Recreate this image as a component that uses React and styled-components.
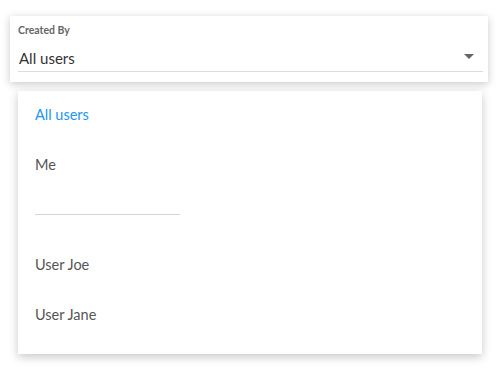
import React from "react";
import styled, { createGlobalStyle } from "styled-components";

const Global = createGlobalStyle`
  body {
    margin: 0;
    background: #fff;
    font-family: Lato, "Open Sans", sans-serif;
  }
`;

const Page = styled.div`
  width: 500px;
  height: 380px;
  padding-top: 16px;
  box-sizing: border-box;
`;

const SelectCard = styled.div`
  margin-left: 10px;
  width: 478px;
  height: 66px;
  box-sizing: border-box;
  padding: 7px 5px 0 8px;
  background: #fff;
  box-shadow: 0 2px 8px rgba(0, 0, 0, 0.22);
`;

const Label = styled.div`
  font-size: 10.5px;
  font-weight: 700;
  color: #666;
  line-height: 14px;
`;

const Field = styled.div`
  display: flex;
  align-items: flex-end;
  justify-content: space-between;
  height: 35px;
  box-sizing: border-box;
  padding: 0 9px 4px 1px;
  border-bottom: 1px solid #ddd;
  font-size: 15px;
  line-height: 18px;
  color: #333;
  svg {
    margin-bottom: 8px;
  }
`;

const Menu = styled.div`
  margin: 9px 0 0 18px;
  width: 464px;
  height: 263px;
  box-sizing: border-box;
  background: #fff;
  box-shadow: 0 3px 9px rgba(0, 0, 0, 0.22);
  padding-left: 17px;
`;

const Item = styled.div`
  height: 50px;
  box-sizing: border-box;
  padding-bottom: 4px;
  display: flex;
  align-items: center;
  font-size: 14.5px;
  color: ${(p) => (p.$active ? "#2196f3" : "#555")};
`;

const DividerRow = styled.div`
  height: 50px;
  display: flex;
  align-items: center;
`;

const Divider = styled.div`
  width: 145px;
  height: 1px;
  margin-top: -3px;
  background: #d6d6d6;
`;

function Caret() {
  return (
    <svg width="10" height="5" viewBox="0 0 10 5">
      <path d="M0 0h10L5 5z" fill="#666" />
    </svg>
  );
}

export default function App() {
  return (
    <Page>
      <Global />
      <SelectCard>
        <Label>Created By</Label>
        <Field>
          <span>All users</span>
          <Caret />
        </Field>
      </SelectCard>
      <Menu>
        <Item $active>All users</Item>
        <Item>Me</Item>
        <DividerRow>
          <Divider />
        </DividerRow>
        <Item>User Joe</Item>
        <Item>User Jane</Item>
      </Menu>
    </Page>
  );
}
